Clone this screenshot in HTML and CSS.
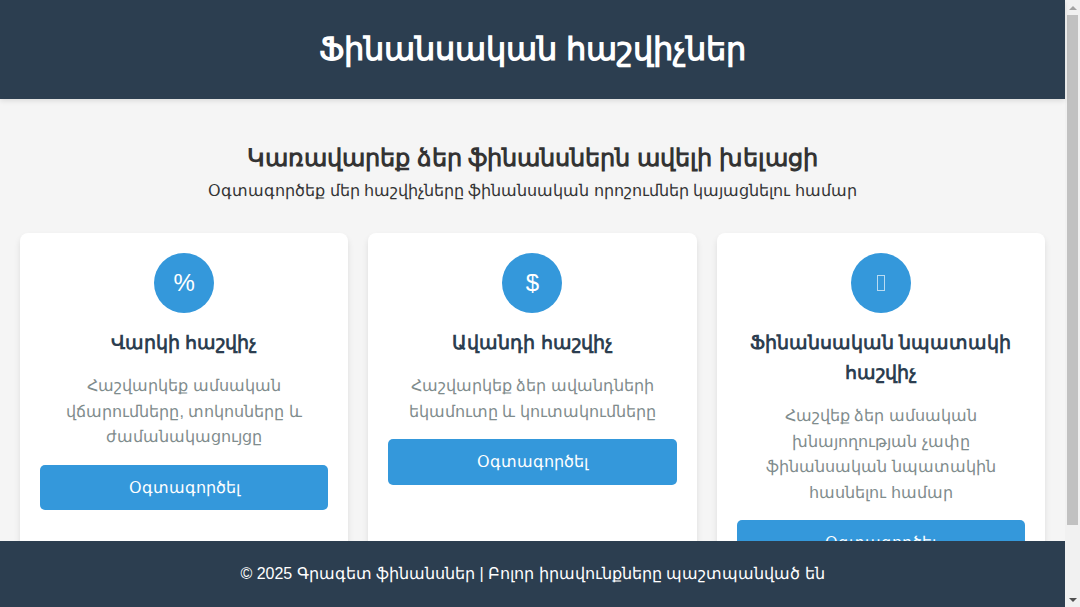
FILE: index.html
```html
<!DOCTYPE html>
<html lang="hy">
<head>
<meta charset="utf-8">
<title>Ֆինանսական հաշվիչներ</title>
<link rel="stylesheet" href="styles.css">
</head>
<body>
<div class="page">
  <header class="site-header"><h1>Ֆինանսական հաշվիչներ</h1></header>
  <main class="main">
    <section class="intro">
      <h2>Կառավարեք ձեր ֆինանսներն ավելի խելացի</h2>
      <p>Օգտագործեք մեր հաշվիչները ֆինանսական որոշումներ կայացնելու համար</p>
    </section>
    <section class="cards">
      <article class="card">
        <div class="icon">%</div>
        <h3>Վարկի հաշվիչ</h3>
        <p>Հաշվարկեք ամսական վճարումները, տոկոսները և ժամանակացույցը</p>
        <a class="btn" href="#">Օգտագործել</a>
      </article>
      <article class="card">
        <div class="icon">$</div>
        <h3>Ավանդի հաշվիչ</h3>
        <p>Հաշվարկեք ձեր ավանդների եկամուտը և կուտակումները</p>
        <a class="btn" href="#">Օգտագործել</a>
      </article>
      <article class="card">
        <div class="icon"><span class="tofu"></span></div>
        <h3>Ֆինանսական նպատակի հաշվիչ</h3>
        <p>Հաշվեք ձեր ամսական խնայողության չափը ֆինանսական նպատակին հասնելու համար</p>
        <a class="btn" href="#">Օգտագործել</a>
      </article>
    </section>
  </main>
  <footer class="site-footer">© 2025 Գրագետ ֆինանսներ | Բոլոր իրավունքները պաշտպանված են</footer>
</div>
<div class="scrollbar">
  <div class="arrow arrow-up"></div>
  <div class="track"><div class="thumb"></div></div>
  <div class="arrow arrow-down"></div>
</div>
</body>
</html>
```
FILE: styles.css
```css
* { box-sizing: border-box; margin: 0; padding: 0; }
html, body { height: 100%; overflow: hidden; }
body {
  display: flex;
  font-family: "Liberation Sans", Arial, sans-serif;
  line-height: 1.6;
  color: #333;
  background: #f5f5f5;
}
.page {
  flex: 1;
  min-width: 0;
  height: 100%;
  display: flex;
  flex-direction: column;
}
.site-header {
  position: relative;
  z-index: 1;
  flex: none;
  background: #2c3e50;
  color: #fff;
  padding: 24px 20px;
  text-align: center;
  box-shadow: 0 2px 5px rgba(0,0,0,.1);
}
.site-header h1 { font-size: 32px; font-weight: 700; }
.main { flex: 1; min-height: 0; overflow: hidden; padding: 40px 20px 0; }
.intro { text-align: center; margin-bottom: 30px; }
.intro h2 { font-size: 24px; font-weight: 700; }
.intro p { font-size: 16px; }
.cards { display: grid; grid-template-columns: repeat(3, 1fr); gap: 20px; }
.card {
  background: #fff;
  border-radius: 8px;
  box-shadow: 0 4px 6px rgba(0,0,0,.1);
  padding: 20px;
  text-align: center;
}
.icon {
  width: 60px;
  height: 60px;
  margin: 0 auto 15px;
  border-radius: 50%;
  background: #3498db;
  color: #fff;
  font-size: 24px;
  display: flex;
  align-items: center;
  justify-content: center;
}
.tofu {
  width: 8px;
  height: 16px;
  border: 1px solid rgba(255, 255, 255, .65);
}
.card h3 { font-size: 19.2px; line-height: 30px; color: #2c3e50; margin-bottom: 15px; }
.card p { color: #7f8c8d; margin-bottom: 14.6px; }
.btn {
  display: block;
  padding: 10px;
  background: #3498db;
  color: #fff;
  text-decoration: none;
  border-radius: 5px;
}
.site-footer {
  flex: none;
  background: #2c3e50;
  color: #fff;
  text-align: center;
  padding: 20px;
}
.scrollbar {
  flex: none;
  width: 15px;
  height: 100%;
  background: #f1f1f1;
  display: flex;
  flex-direction: column;
}
.arrow { flex: none; height: 15px; display: flex; align-items: center; justify-content: center; }
.arrow::before { content: ""; border-left: 4px solid transparent; border-right: 4px solid transparent; }
.arrow-up::before { border-bottom: 4px solid #a3a3a3; }
.arrow-down::before { border-top: 4px solid #505050; }
.track { flex: 1; }
.thumb { height: 510px; margin: 0 2px; background: #c1c1c1; }
```
